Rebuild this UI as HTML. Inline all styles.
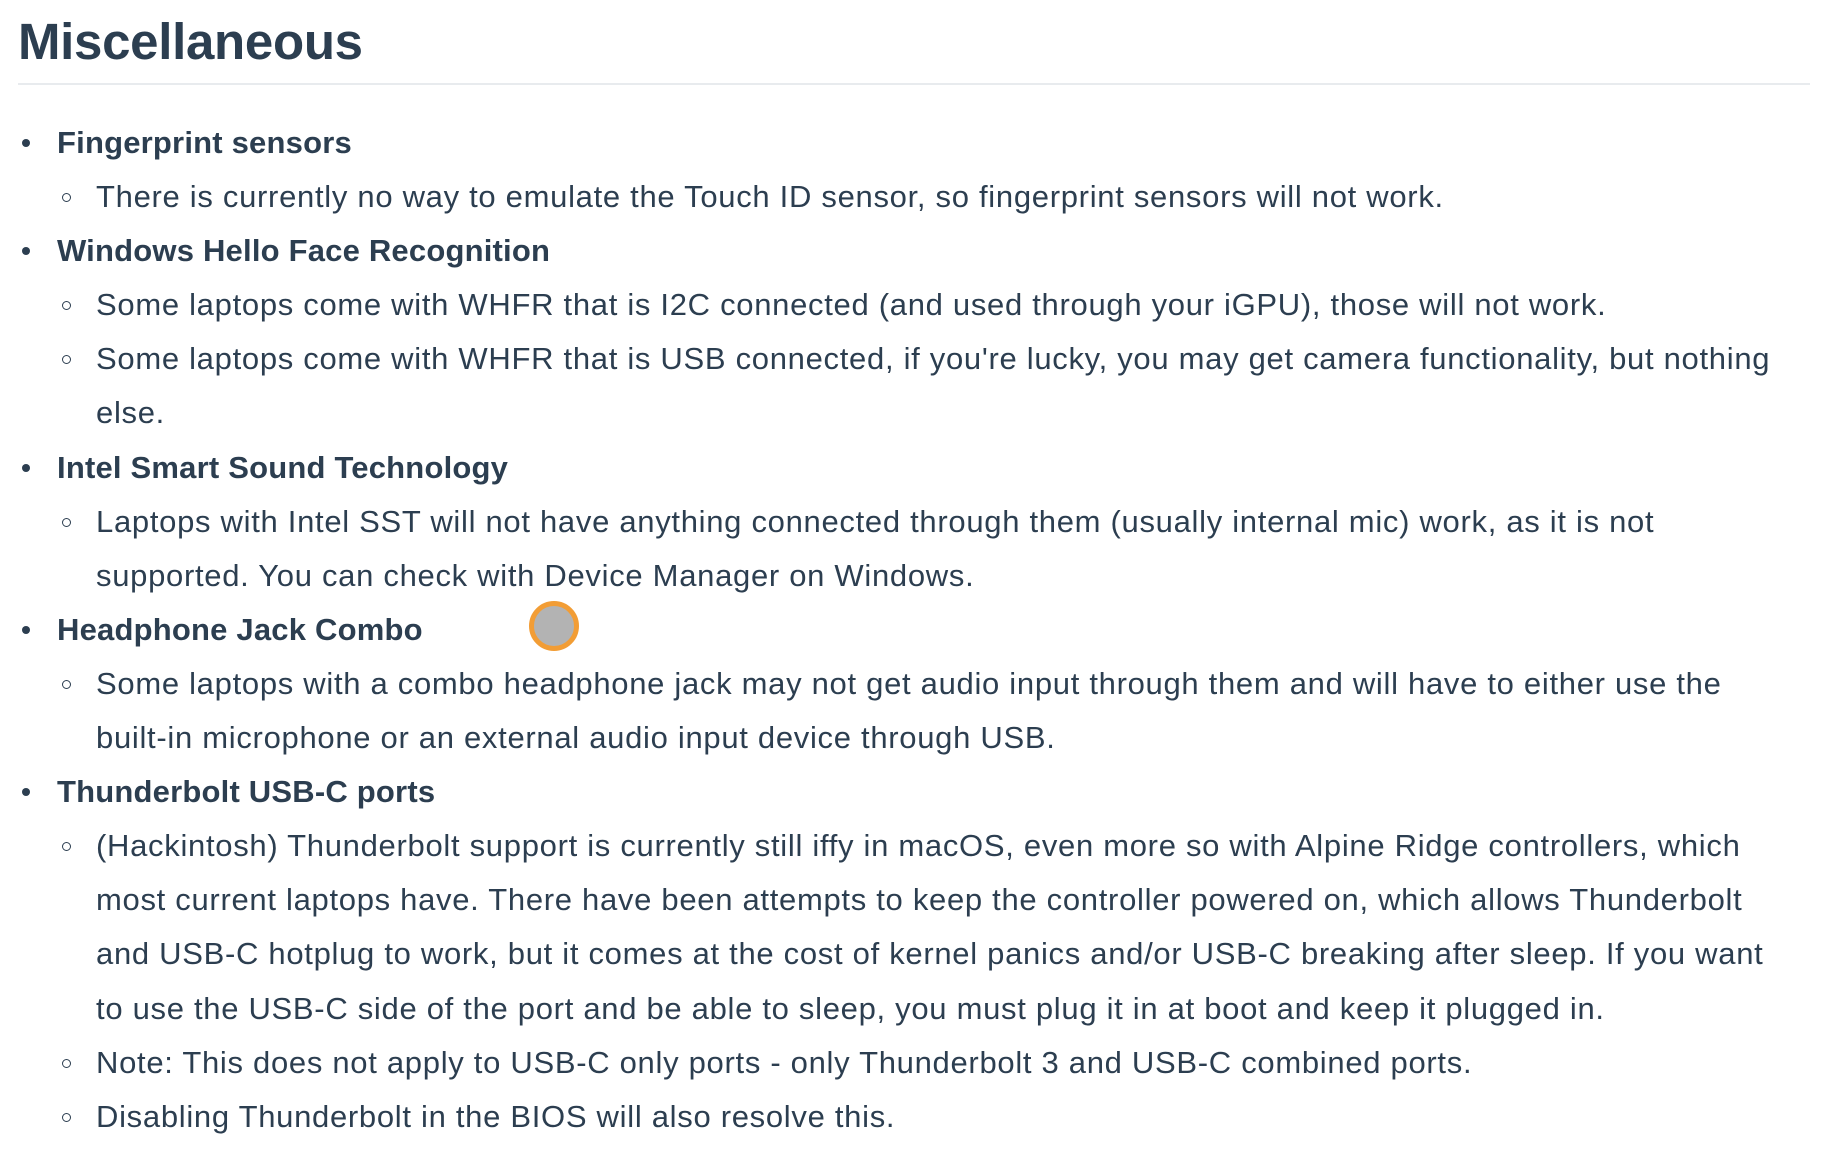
<!DOCTYPE html>
<html><head><meta charset="utf-8"><style>
html,body{margin:0;padding:0;background:#fff;width:1830px;height:1157px;overflow:hidden}
body{font-family:"Liberation Sans",sans-serif;color:#2c3e50;position:relative}
h2{position:absolute;left:18px;top:7px;margin:0;font-size:51px;font-weight:bold;letter-spacing:-0.3px;line-height:70px}
.rule{position:absolute;left:18px;top:83px;width:1792px;height:2px;background:#e8ebee}
.lines{position:absolute;left:0;top:116px;font-size:31px;letter-spacing:0.7px}
.l{height:54.1px;line-height:54.1px;white-space:nowrap;position:relative}
.b{padding-left:57px;font-weight:bold;letter-spacing:0.2px}
.b:before{content:"";position:absolute;left:22px;top:23px;width:8px;height:8px;border-radius:50%;background:#2c3e50}
.s{padding-left:96px}
.s.c:before{content:"";position:absolute;left:62px;top:23px;width:7px;height:7px;border-radius:50%;border:1.6px solid #2c3e50}
.dot{position:absolute;left:529px;top:601px;width:40px;height:40px;border-radius:50%;background:#b3b3b3;border:5px solid #f29d35}
</style></head><body>
<h2>Miscellaneous</h2>
<div class="rule"></div>
<div class="lines">
<div class="l b">Fingerprint sensors</div>
<div class="l s c">There is currently no way to emulate the Touch ID sensor, so fingerprint sensors will not work.</div>
<div class="l b">Windows Hello Face Recognition</div>
<div class="l s c">Some laptops come with WHFR that is I2C connected (and used through your iGPU), those will not work.</div>
<div class="l s c">Some laptops come with WHFR that is USB connected, if you're lucky, you may get camera functionality, but nothing</div>
<div class="l s">else.</div>
<div class="l b">Intel Smart Sound Technology</div>
<div class="l s c">Laptops with Intel SST will not have anything connected through them (usually internal mic) work, as it is not</div>
<div class="l s">supported. You can check with Device Manager on Windows.</div>
<div class="l b">Headphone Jack Combo</div>
<div class="l s c">Some laptops with a combo headphone jack may not get audio input through them and will have to either use the</div>
<div class="l s">built-in microphone or an external audio input device through USB.</div>
<div class="l b">Thunderbolt USB-C ports</div>
<div class="l s c">(Hackintosh) Thunderbolt support is currently still iffy in macOS, even more so with Alpine Ridge controllers, which</div>
<div class="l s">most current laptops have. There have been attempts to keep the controller powered on, which allows Thunderbolt</div>
<div class="l s">and USB-C hotplug to work, but it comes at the cost of kernel panics and/or USB-C breaking after sleep. If you want</div>
<div class="l s">to use the USB-C side of the port and be able to sleep, you must plug it in at boot and keep it plugged in.</div>
<div class="l s c">Note: This does not apply to USB-C only ports - only Thunderbolt 3 and USB-C combined ports.</div>
<div class="l s c">Disabling Thunderbolt in the BIOS will also resolve this.</div>
</div>
<div class="dot"></div>
</body></html>
